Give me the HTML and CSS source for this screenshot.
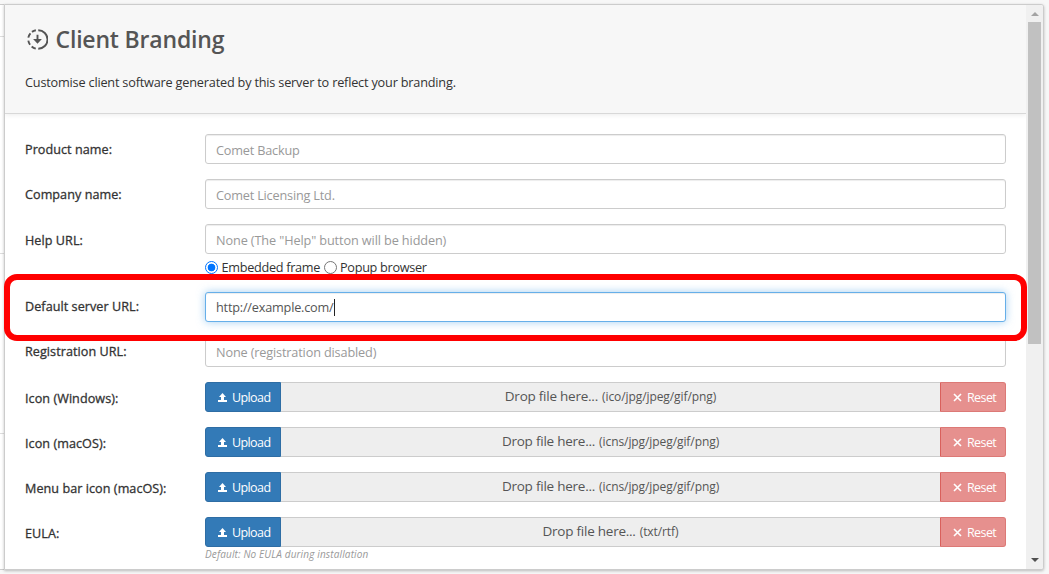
FILE: index.html
```
<!DOCTYPE html>
<html lang="en">
<head>
<meta charset="utf-8">
<title>Client Branding</title>
<link rel="stylesheet" href="styles.css">
</head>
<body>
<svg class="defs" width="0" height="0">
  <symbol id="upload" viewBox="0 0 9 9"><path d="M4.5 0 8 4H6V7H9V9H0V7H3V4H1z"/></symbol>
  <symbol id="cross" viewBox="0 0 9 9"><path d="M1 1l7 7M8 1 1 8" fill="none" stroke="currentColor" stroke-width="1.6"/></symbol>
</svg>
<div class="app">
  <aside class="side"><div class="side-a"></div><div class="side-b"></div><div class="side-c"></div></aside>
  <main class="panel">
    <div class="content">
      <header class="head">
        <h1 class="title">
          <svg class="title-icon" viewBox="0 0 22 22" fill="none" stroke="currentColor" stroke-width="2">
            <path d="M11.8 1.3A9.7 9.7 0 0 1 11.8 20.7"/>
            <path d="M9.3 1.3A9.7 9.7 0 0 0 5.2 3M3.6 4.6A9.7 9.7 0 0 0 1.4 9M1.4 12.2A9.7 9.7 0 0 0 3.2 16.5M4.9 18.3A9.7 9.7 0 0 0 9.2 20.6"/>
            <path d="M11 6V12"/><path d="M6.4 10.6h9.2L11 15.4z" fill="currentColor" stroke="none"/>
          </svg><span>Client Branding</span></h1>
        <p class="desc">Customise client software generated by this server to reflect your branding.</p>
      </header>
      <form class="form">
        <div class="row"><label class="label">Product name:</label><div class="input muted">Comet Backup</div></div>
        <div class="row"><label class="label">Company name:</label><div class="input muted">Comet Licensing Ltd.</div></div>
        <div class="row help"><label class="label low">Help URL:</label>
          <div class="field"><div class="input muted wide">None (The "Help" button will be hidden)</div>
            <div class="radios"><i class="radio on"></i><span class="opt-a">Embedded frame</span><i class="radio"></i><span class="opt-b">Popup browser</span></div>
          </div></div>
        <div class="row"><label class="label mid">Default server URL:</label><div class="input focus">http://example.com/<i class="caret"></i></div></div>
        <div class="row"><label class="label mid">Registration URL:</label><div class="input muted raised">None (registration disabled)</div></div>
        <div class="row"><label class="label low">Icon (Windows):</label><div class="group"><span class="btn up"><svg class="ic"><use href="#upload"/></svg><b>Upload</b></span><span class="drop"><span class="drop-main">Drop file here...</span><span class="types">(ico/jpg/jpeg/gif/png)</span></span><span class="btn reset"><svg class="ic"><use href="#cross"/></svg><b>Reset</b></span></div></div>
        <div class="row"><label class="label low">Icon (macOS):</label><div class="group"><span class="btn up"><svg class="ic"><use href="#upload"/></svg><b>Upload</b></span><span class="drop"><span class="drop-main">Drop file here...</span><span class="types">(icns/jpg/jpeg/gif/png)</span></span><span class="btn reset"><svg class="ic"><use href="#cross"/></svg><b>Reset</b></span></div></div>
        <div class="row"><label class="label low">Menu bar icon (macOS):</label><div class="group"><span class="btn up"><svg class="ic"><use href="#upload"/></svg><b>Upload</b></span><span class="drop"><span class="drop-main">Drop file here...</span><span class="types">(icns/jpg/jpeg/gif/png)</span></span><span class="btn reset"><svg class="ic"><use href="#cross"/></svg><b>Reset</b></span></div></div>
        <div class="row"><label class="label low">EULA:</label><div class="field"><div class="group"><span class="btn up"><svg class="ic"><use href="#upload"/></svg><b>Upload</b></span><span class="drop"><span class="drop-main">Drop file here...</span><span class="types">(txt/rtf)</span></span><span class="btn reset"><svg class="ic"><use href="#cross"/></svg><b>Reset</b></span></div><div class="hint">Default: No EULA during installation</div></div></div>
      </form>
    </div>
    <div class="scroll"><i class="arrow-up"></i><i class="thumb"></i><i class="arrow-down"></i></div>
  </main>
  <div class="highlight"></div>
</div>
</body>
</html>
```
FILE: styles.css
```
* { box-sizing: border-box; }
body { margin: 0; background: #f7f7f7; color: #333; font: 13px/20px "Open Sans", "Noto Sans", sans-serif; overflow: hidden; }
.defs { position: absolute; }
.app { position: relative; display: flex; width: 1049px; height: 574px; padding: 4px 5px 4px 0; }
.side { width: 4px; display: flex; flex-direction: column; background: #fff; border-top: 1px solid #ccc; border-bottom: 1px solid #ccc; }
.side div { border-bottom: 1px solid #ddd; }
.side-a { height: 32px; }
.side-b { height: 217px; }
.side-c { height: 180px; }
.panel { display: flex; width: 1040px; height: 566px; background: #fff; border: 1px solid #ccc; border-radius: 0 3px 3px 0; box-shadow: 0 1px 3px rgba(0,0,0,.25); overflow: hidden; }
.content { width: 1021px; height: 564px; overflow: hidden; }
.head { height: 109px; padding: 19px 20px 0; background: #f7f7f7; border-bottom: 1px solid #d8d8d8; box-shadow: 0 1px 5px rgba(0,0,0,.08); }
.title { display: flex; align-items: center; margin: 0; height: 30px; font-size: 23px; line-height: 30px; font-weight: 600; color: #555; letter-spacing: -.18px; white-space: nowrap; }
.title-icon { width: 21px; height: 21px; margin: 1px 8px 0 1.5px; }
.desc { margin: 18px 0 0; font-size: 12.7px; white-space: nowrap; letter-spacing: -.19px; }
.form { padding: 20px 20px 0; }
.row { display: flex; height: 30px; margin-bottom: 15px; }
.help { height: 53px; }
.label { width: 180px; flex: none; padding-top: 6px; font-size: 12.6px; font-weight: 500; letter-spacing: .06px; white-space: nowrap; -webkit-text-stroke: .3px #333; }
.mid { padding-top: 5px; }
.low { padding-top: 7px; }
.field { width: 801px; }
.input { width: 801px; height: 30px; padding: 5px 10px; border: 1px solid #ccc; border-radius: 3px; background: #fff; color: #555; font-size: 12.7px; line-height: 21px; letter-spacing: -.19px; white-space: nowrap; box-shadow: inset 0 1px 1px rgba(0,0,0,.075); }
.wide { letter-spacing: -.11px; }
.raised { padding-top: 4px; letter-spacing: -.15px; }
.muted { color: #999; }
.focus { padding-top: 4px; letter-spacing: -.2px; border-color: #66afe9; box-shadow: inset 0 1px 1px rgba(0,0,0,.075), 0 0 8px rgba(102,175,233,.6); }
.caret { display: inline-block; width: 1px; height: 17px; background: #222; vertical-align: -4px; }
.radios { display: flex; align-items: center; height: 26px; font-size: 12.7px; letter-spacing: -.3px; white-space: nowrap; }
.radio { flex: none; width: 13px; height: 13px; border: 1px solid #767676; border-radius: 50%; background: #fff; }
.radio.on { border-color: #0075ff; background: radial-gradient(circle, #0075ff 0 3.5px, #fff 4.2px); }
.opt-a { width: 99px; margin-left: 3.5px; margin-right: 3.5px; }
.opt-b { margin-left: 3px; }
.group { display: flex; width: 801px; height: 30px; }
.btn { display: flex; align-items: center; height: 30px; padding: 1px 0 0 12px; color: #fff; border: 1px solid #2e6da4; }
.btn b { font-weight: 400; font-size: 12.5px; letter-spacing: -.6px; }
.ic { width: 9px; height: 9px; margin-right: 5px; fill: currentColor; }
.up { width: 76px; background: #337ab7; border-radius: 3px 0 0 3px; }
.reset { width: 66px; background: #e6908e; border-color: #dc7976; border-left-color: #d9605c; border-radius: 0 3px 3px 0; }
.drop { flex: 1; display: flex; justify-content: center; align-items: baseline; padding-top: 3px; background: #eee; border: solid #ccc; border-width: 1px 0; color: #555; white-space: nowrap; }
.drop-main { font-size: 13.5px; letter-spacing: -.24px; margin-right: 4px; }
.types { font-size: 12px; letter-spacing: -.08px; }
.hint { font-size: 10px; line-height: 15px; letter-spacing: .14px; font-style: italic; color: #999; white-space: nowrap; }
.scroll { width: 17px; height: 564px; background: #f0f0f0; display: flex; flex-direction: column; align-items: center; }
.arrow-up { margin-top: 7px; border: 4px solid transparent; border-top: 0; border-bottom-color: #a3a3a3; }
.thumb { width: 13px; height: 322px; margin-top: 6px; background: #c1c1c1; }
.arrow-down { margin-top: auto; margin-bottom: 7px; border: 4px solid transparent; border-bottom: 0; border-top-color: #505050; }
.highlight { position: absolute; left: 4px; top: 274px; width: 1023px; height: 67px; border: 6px solid #f00; border-radius: 13px; }
```
